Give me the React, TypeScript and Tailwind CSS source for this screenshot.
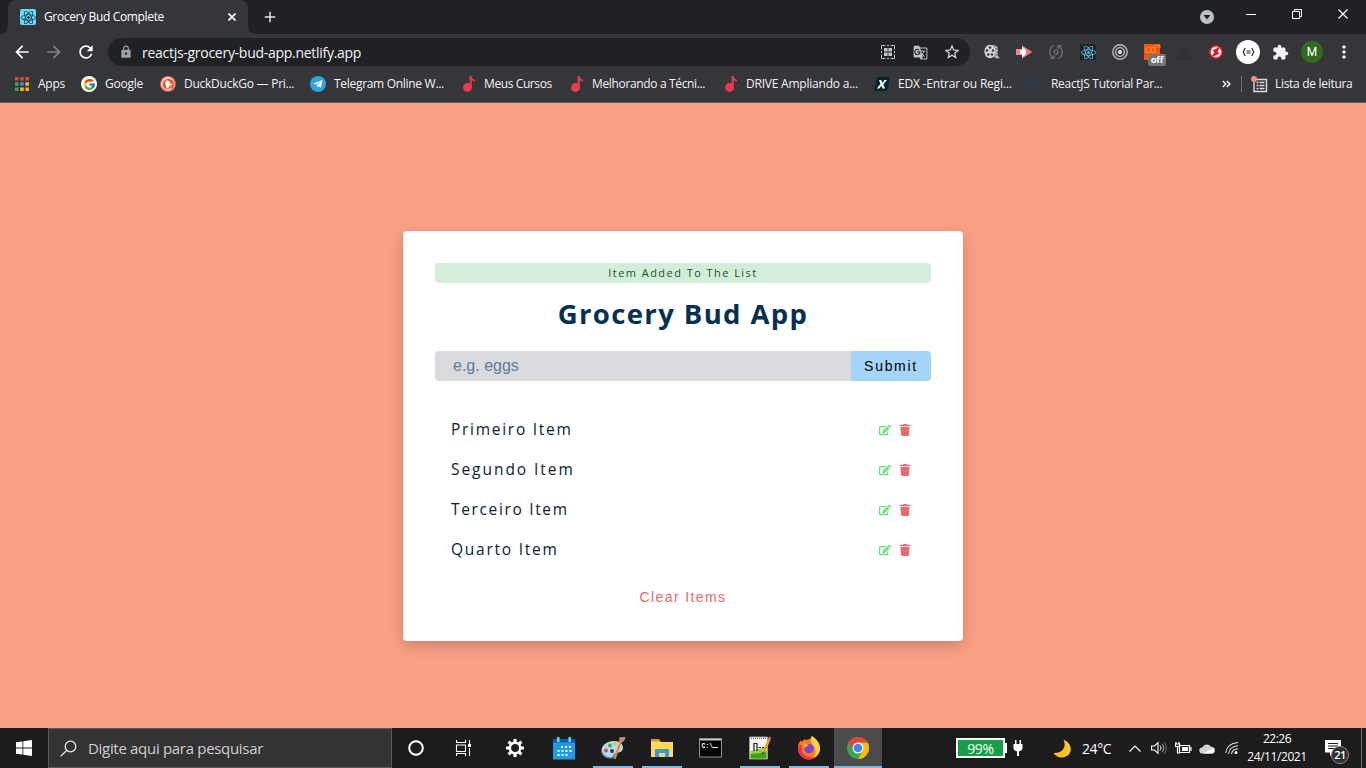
import type { ReactNode } from "react";
import { FaEdit, FaTrash, FaReact, FaTelegramPlane } from "react-icons/fa";
import { FcGoogle } from "react-icons/fc";
import { SiDuckduckgo } from "react-icons/si";
import { MdArrowBack, MdArrowForward, MdRefresh, MdLock, MdStarBorder, MdExtension, MdMoreVert, MdGTranslate, MdAdd } from "react-icons/md";

function Svg({ w, h, className = "", children }: { w: number; h: number; className?: string; children: ReactNode }) {
  return (
    <svg width={w} height={h} viewBox={`0 0 ${w} ${h}`} fill="none" className={`shrink-0 ${className}`}>
      {children}
    </svg>
  );
}

function TabStrip() {
  return (
    <div className="flex h-[34px] bg-[#202124] pl-2">
      <div className="relative flex w-[240px] items-center rounded-t-lg bg-[#35363a] pl-3">
        <div className="flex size-4 items-center justify-center rounded-[2px] bg-[#61dafb]">
          <FaReact size={15} color="#20232a" />
        </div>
        <span className="ml-2 w-[184px] whitespace-nowrap text-[12px] tracking-[-0.35px] text-white">Grocery Bud Complete</span>
        <Svg w={8} h={8}><path d="M.5.5l7 7M7.500.5l-7 7" stroke="#fff" strokeWidth="1.600" /></Svg>
        <Svg w={8} h={8} className="absolute bottom-0 -left-2">
          <path d="M8 0v8H0a8 8 0 0 0 8-8z" fill="#35363a" />
        </Svg>
        <Svg w={8} h={8} className="absolute bottom-0 -right-2">
          <path d="M0 0v8h8a8 8 0 0 1-8-8z" fill="#35363a" />
        </Svg>
      </div>
      <div className="flex flex-1 items-center pl-[13px]">
        <MdAdd size={18} color="#dee1e6" />
      </div>
      <div className="flex w-[178px] items-start">
        <Svg w={178} h={34}>
          <circle cx="19" cy="17" r="7" fill="#bdc1c6" />
          <path d="M15.5 15h7L19 19.5z" fill="#202124" />
          <path d="M58 14.500h10" stroke="#fff" />
          <path d="M104.500 11.500h7v7h-7zM106.500 11.500v-2h7v7h-2" stroke="#fff" />
          <path d="M150.500 9.500l9 9m0-9l-9 9" stroke="#fff" strokeWidth="1.2" />
        </Svg>
      </div>
    </div>
  );
}

function Cell({ children }: { children: ReactNode }) {
  return <div className="relative flex h-9 w-8 shrink-0 items-center justify-center">{children}</div>;
}

function Toolbar() {
  return (
    <div className="flex h-9 items-center pl-[6px]">
      <Cell><MdArrowBack size={20} color="#fff" /></Cell>
      <Cell><MdArrowForward size={20} color="#808286" /></Cell>
      <Cell><MdRefresh size={20} color="#fff" /></Cell>
      <div className="ml-[6px] flex h-7 w-[862px] items-center rounded-full bg-[#202124] pl-[11px]">
        <MdLock size={14} color="#9aa0a6" />
        <span className="ml-[9px] flex-1 whitespace-nowrap text-[14px] tracking-[-0.28px] text-[#f1f3f4]">reactjs-grocery-bud-app.netlify.app</span>
        <Cell>
          <Svg w={14} h={14}>
            <path d="M4.500.5H.5V4.500M9.500.5H13.500V4.500M4.500 13.500H.5V9.500M9.500 13.500H13.500V9.500M6 .5h2M6 13.500h2M.5 6v2M13.500 6v2" stroke="#bdc1c6" />
            <path d="M3 3h3.600v3.600H3zM7.400 3H11v3.600H7.400zM3 7.400h3.600V11H3zM7.400 7.400H11V11H7.400z" fill="#c4c7cb" />
          </Svg>
        </Cell>
        <Cell><MdGTranslate size={15} color="#bdc1c6" /></Cell>
        <Cell><MdStarBorder size={18} color="#dadce0" /></Cell>
        <div className="w-[2px]" />
      </div>
      <div className="w-[6px]" />
      <Cell>
        <Svg w={16} h={16}>
          <path d="M8 1c5-1 6 3 5.500 7 0 3 .5 4 2.500 6-3 1.500-6 0-7-1z" fill="#8b8b8b" />
          <ellipse cx="6" cy="7.500" rx="5.600" ry="6.800" fill="#d4d4d4" />
          <g fill="#37383c">
            <circle cx="6" cy="3.500" r="1.300" /><circle cx="3" cy="6.500" r="1.200" /><circle cx="4.300" cy="10.500" r="1.300" /><circle cx="8" cy="10.500" r="1.200" /><circle cx="9" cy="6.500" r="1.200" />
          </g>
          <path d="M11.500 3l2 1M12 6l2 1M11.500 9l2 1M11.500 12l3 1.500" stroke="#e6e6e6" />
        </Svg>
      </Cell>
      <Cell>
        <Svg w={16} h={16}>
          <path d="M0 5h6V1.500L10 4l6 4-6 4-4 2.500V11H0z" fill="#f98484" />
          <path d="M4 6h6v4H4z" fill="#fff" /><path d="M6 3l3 2v6l-3 2z" fill="#fff" /><path d="M10 4.500L16 8l-6 3.500z" fill="#f47474" />
        </Svg>
      </Cell>
      <Cell>
        <Svg w={16} h={16}>
          <path d="M6 1.500C2 2.500.5 8 3 12l3 2.500M6 14.500H2.500M6 14.500V11M10 14.500c4-1 5.500-6.500 3-10.500L10 1.500M10 1.500h3.500M10 1.500V5" stroke="#737578" strokeWidth="1.200" />
          <circle cx="8" cy="8" r="2" stroke="#737578" strokeWidth="1.200" />
        </Svg>
      </Cell>
      <Cell>
        <div className="flex size-4 items-center justify-center bg-[#202226]"><FaReact size={15} color="#61dafb" /></div>
      </Cell>
      <Cell>
        <Svg w={16} h={16}>
          <circle cx="8" cy="8" r="7.200" stroke="#bdbdbd" strokeWidth="1.400" />
          <circle cx="8" cy="8" r="4.400" stroke="#bdbdbd" strokeWidth="1.400" />
          <circle cx="8" cy="8" r="2.200" fill="#d0d0d0" />
        </Svg>
      </Cell>
      <Cell>
        <div className="flex h-4 w-4 bg-[#ff5200] pl-px text-[#ffa56e]">
          <span className="text-[11px] leading-[10px] tracking-[-0.5px]">cd</span>
          <span className="text-[5px] leading-[5px]">m</span>
        </div>
        <div className="absolute top-[20px] left-[12px] flex h-[12px] w-[18px] items-center justify-center rounded-[2px] bg-[#757575] text-[9.5px] font-bold leading-none tracking-[-0.2px] text-white">off</div>
      </Cell>
      <Cell>
        <Svg w={14} h={15}><path d="M7 0v10M2.500 6.500L7 11l4.500-4.500M0 13.500h14" stroke="#2d2e31" strokeWidth="1.800" /></Svg>
      </Cell>
      <Cell>
        <Svg w={14} h={14}>
          <circle cx="7" cy="7" r="6.200" fill="#fff" stroke="#e8141a" strokeWidth="1.600" />
          <path d="M10.800 1.800L3.400 5.400l1.900 1.800-2.800 5 8-3.600-1.900-1.800z" fill="#e8141a" />
        </Svg>
      </Cell>
      <Cell>
        <div className="flex size-6 shrink-0 items-center justify-center rounded-full bg-white">
          <Svg w={13} h={8}>
            <path d="M3.500.5C1.500.5 2.800 3.500.8 4c2 .5.7 3.500 2.700 3.500M9.500.5c2 0 .7 3 2.700 3.500-2 .5-.7 3.500-2.700 3.500M4.500 3h4M4.500 5h4" stroke="#202124" strokeWidth="1.200" />
          </Svg>
        </div>
      </Cell>
      <Cell><MdExtension size={17} color="#f1f3f4" /></Cell>
      <Cell>
        <div className="flex size-[22px] items-center justify-center rounded-full bg-[#33691e] font-['Roboto',sans-serif] text-[12px] text-white">M</div>
      </Cell>
      <Cell><MdMoreVert size={20} color="#f1f3f4" /></Cell>
    </div>
  );
}

const note = (
  <Svg w={16} h={16}>
    <circle cx="7.500" cy="11.500" r="4.400" fill="#f0384f" />
    <path d="M9.500 0h2c.3 2 1 3 3.500 4v1.200c-1.500 0-2.400-.5-3.200-1.500V12H10z" fill="#f0384f" />
  </Svg>
);

const appsIcon = (
  <Svg w={14} h={14}>
    <path d="M0 0h3.500v3.500H0zM5.200 0h3.500v3.500H5.200zM10.400 0h3.500v3.500h-3.500z" fill="#ea4335" />
    <path d="M0 5.200h3.500v3.500H0zM0 10.400h3.500v3.500H0z" fill="#34a853" />
    <path d="M5.200 5.200h3.500v3.500H5.200z" fill="#4285f4" />
    <path d="M10.400 5.200h3.500v3.500h-3.500zM5.200 10.400h3.500v3.500H5.200zM10.400 10.400h3.500v3.500h-3.500z" fill="#fbbc05" />
  </Svg>
);

function Bookmark({ icon, text, className }: { icon: ReactNode; text: string; className: string }) {
  return (
    <div className={`flex shrink-0 items-center ${className}`}>
      <div className="flex w-4 shrink-0 justify-center">{icon}</div>
      <span className="ml-2 whitespace-nowrap">{text}</span>
    </div>
  );
}

function Bookmarks() {
  return (
    <div className="flex h-[33px] items-center border-b border-[#5f6065] pb-[4px] pl-[14px] text-[12px] tracking-[-0.3px] text-[#f1f3f4]">
      <Bookmark className="w-[67px] tracking-[-0.25px]" text="Apps" icon={appsIcon} />
      <Bookmark className="w-[79px] tracking-[-0.25px]" text="Google" icon={<div className="flex size-4 items-center justify-center rounded-full bg-white"><FcGoogle size={13} /></div>} />
      <Bookmark
        className="w-[150px] tracking-[-0.25px]"
        text="DuckDuckGo — Pri..."
        icon={<div className="flex size-4 items-center justify-center rounded-full bg-[#de5833]"><div className="flex size-[14px] items-center justify-center rounded-full bg-white"><SiDuckduckgo size={13} color="#de5833" /></div></div>}
      />
      <Bookmark className="w-[150px]" text="Telegram Online W..." icon={<div className="flex size-4 items-center justify-center rounded-full bg-[#2ca5e0]"><FaTelegramPlane size={10} color="#fff" /></div>} />
      <Bookmark className="w-[108px] tracking-[-0.4px]" text="Meus Cursos" icon={note} />
      <Bookmark className="w-[154px] tracking-[-0.35px]" text="Melhorando a Técni..." icon={note} />
      <Bookmark className="w-[152px] tracking-[-0.22px]" text="DRIVE Ampliando a..." icon={note} />
      <Bookmark
        className="w-[153px] tracking-[-0.2px]"
        text="EDX -Entrar ou Regi..."
        icon={
          <Svg w={16} h={14}>
            <path d="M3 0h13l-2.500 14H0z" fill="#02262b" />
            <path d="M5 3h2.300l1 3 2.200-3H13L9.300 7.200 11 11.500H8.600L7.500 8.700 5.300 11.500H2.800L6.500 7z" fill="#fff" />
          </Svg>
        }
      />
      <Bookmark
        className="flex-1"
        text="ReactJS Tutorial Par..."
        icon={<Svg w={16} h={16}><path d="M1 2h9v11H1zM12 14h4M7.500 6H4v4h3.500" stroke="#26405a" strokeWidth="1.200" /></Svg>}
      />
      <Svg w={9} h={8} className="mr-[10px]"><path d="M.8 1l3 3-3 3M4.800 1l3 3-3 3" stroke="#f1f3f4" strokeWidth="1.500" /></Svg>
      <div className="mr-[9px] h-4 w-px bg-[#6b6c70]" />
      <Svg w={17} h={17}>
        <path d="M3 3.500h12.500v12H3z" stroke="#dadce0" strokeWidth="1.400" />
        <path d="M5.500 6.500h2M8.500 6.500h5M5.500 9.500h2M8.500 9.500h5M5.500 12.500h2M8.500 12.500h5" stroke="#dadce0" strokeWidth="1.600" />
        <circle cx="3" cy="3" r="3" fill="#f28b82" />
      </Svg>
      <span className="mr-[14px] ml-[7px] w-[77px] whitespace-nowrap">Lista de leitura</span>
    </div>
  );
}

const items = [
  { text: "Primeiro Item", tracking: "tracking-[1.72px]" },
  { text: "Segundo Item", tracking: "tracking-[1.95px]" },
  { text: "Terceiro Item", tracking: "tracking-[1.65px]" },
  { text: "Quarto Item", tracking: "tracking-[1.75px]" },
];

function Card() {
  return (
    <main className="h-[410px] w-[560px] rounded-[4px] bg-white p-8 shadow-[0_5px_15px_rgba(0,0,0,0.2)]">
      <p className="flex h-5 items-center justify-center rounded-[4px] bg-[#d4edda] text-[11px] tracking-[1.45px] text-[#155724]">Item Added To The List</p>
      <h1 className="mt-[10px] text-center text-[27.5px] leading-[42px] font-bold tracking-[1.38px] text-[#053050]">Grocery Bud App</h1>
      <div className="mt-4 flex h-[30px] font-['Liberation_Sans',Arial,sans-serif]">
        <input className="w-[416px] rounded-l-[4px] bg-[#dadbde] pl-[18px] text-[16px] outline-none placeholder:text-[#617d98]" placeholder="e.g. eggs" />
        <button className="w-20 rounded-r-[4px] bg-[#a5d5f8] text-[14px] tracking-[1.7px] text-black">Submit</button>
      </div>
      <div className="mt-[29px]">
        {items.map(({ text, tracking }) => (
          <div key={text} className="flex h-10 items-center pr-5 pl-4">
            <p className={`flex-1 text-[15.5px] text-[#0a2236] ${tracking}`}>{text}</p>
            <FaEdit size={12} color="#66e575" className="mb-px" />
            <FaTrash size={12} color="#e66b6b" className="mb-px ml-[8px]" />
          </div>
        ))}
      </div>
      <button className="mx-auto mt-[17px] block h-5 font-['Liberation_Sans',Arial,sans-serif] text-[14px] tracking-[1.4px] text-[#e66b6b]">Clear Items</button>
    </main>
  );
}

function Task({ running, active, children }: { running?: boolean; active?: boolean; children: ReactNode }) {
  return (
    <div className={`relative mr-px flex h-10 w-12 shrink-0 items-center justify-center ${active ? "bg-[#4b4b4b]" : ""}`}>
      {children}
      {(running || active) && <div className={`absolute bottom-0 h-[2px] bg-[#76b9ed] ${active ? "w-12" : "w-10"}`} />}
    </div>
  );
}

function Gear() {
  return (
    <Svg w={18} h={18}>
      <g stroke="#fff" strokeWidth="3.200">
        <path d="M9 0v4M9 14v4M0 9h4M14 9h4M2.600 2.600l3 3M12.400 12.400l3 3M2.600 15.400l3-3M12.400 5.600l3-3" />
      </g>
      <circle cx="9" cy="9" r="5.200" stroke="#fff" strokeWidth="2.400" fill="#1c1c1c" />
    </Svg>
  );
}

function Taskbar() {
  return (
    <div className="flex h-10 items-center bg-[#1c1c1c] text-white">
      <div className="flex w-12 justify-center">
        <Svg w={16} h={16}><path d="M0 2.300l6.500-.9v6.200H0zM7.300 1.300L16 0v7.600H7.300zM0 8.400h6.500v6.200L0 13.700zM7.300 8.400H16V16l-8.700-1.300z" fill="#fff" /></Svg>
      </div>
      <div className="flex h-10 w-[344px] items-center border border-[#5a5a5a] bg-[#333] pl-[11px]">
        <Svg w={17} h={17}><circle cx="10.500" cy="6.500" r="5.300" stroke="#e8e8e8" strokeWidth="1.300" /><path d="M6.800 10.200L.6 16.400" stroke="#e8e8e8" strokeWidth="1.300" /></Svg>
        <span className="ml-[11px] text-[15px] tracking-[-0.31px] whitespace-nowrap text-[#cfcfcf]">Digite aqui para pesquisar</span>
      </div>
      <div className="flex w-12 justify-center"><Svg w={16} h={16}><circle cx="8" cy="8" r="6.800" stroke="#fff" strokeWidth="2" /></Svg></div>
      <div className="flex w-[51px] justify-center pr-1">
        <Svg w={17} h={16}>
          <path d="M1.500 0v2.500h9V0M1.500 16v-2.500h9V16M1.500 5h9v6.500h-9zM14.500 0v4M14.500 8v8" stroke="#fff" strokeWidth="1.100" />
          <path d="M13 4h3v3h-3z" fill="#fff" />
        </Svg>
      </div>
      <Task><Gear /></Task>
      <Task>
        <Svg w={22} h={23}>
          <path d="M0 2h22v20.500H0z" fill="#1d9bea" /><path d="M0 2h22v3.500H0z" fill="#0f5fa8" />
          <path d="M4 0h2.500v5H4zM15.500 0H18v5h-2.500z" fill="#5dd6f5" />
          <path d="M8 10h10.500M4.500 14h14M4.500 18h10" stroke="#fff" strokeWidth="2" strokeDasharray="2 2" />
        </Svg>
      </Task>
      <Task running>
        <Svg w={25} h={24}>
          <path d="M13 5c6 0 9 3 9 7-1 5-4 4-6 5-3 1-2 4-5 5C6 23 .5 20 .5 14 1 9 6 5 13 5z" fill="#b5d9ef" />
          <path d="M1 16c1 4 6 6.500 10 5.500 2-1 2-3 3-4" stroke="#5b9bc4" strokeWidth="1.500" />
          <circle cx="5" cy="14.500" r="2" fill="#e14b36" /><circle cx="9" cy="9.500" r="1.900" fill="#3fae49" /><circle cx="14" cy="8" r="1.800" fill="#f0b823" /><circle cx="11" cy="15" r="1.900" fill="#26323a" />
          <path d="M13.500 23L20 5" stroke="#e98a24" strokeWidth="2.200" /><path d="M18 6.500L18.500 1c2 1 3-.5 6 0-.5 2-1 4-3.500 5.500z" fill="#b9906a" />
        </Svg>
      </Task>
      <Task running>
        <Svg w={22} h={19}>
          <path d="M0 1h8l2 2h12v15H0z" fill="#ffd767" /><path d="M0 0h8l1.500 2.500H0z" fill="#d99a14" />
          <path d="M4 18v-8h14v8h-4v-4H8v4z" fill="#3a96dd" />
        </Svg>
      </Task>
      <Task>
        <Svg w={23} h={20} className="mr-[2px]">
          <path d="M.5.5h22v18.500H.5z" fill="#050505" stroke="#8f8f8f" /><path d="M1 1h21v1.500H1z" fill="#c8c8c8" />
          <text x="2.500" y="10" fontSize="6.500" fontWeight="bold" fill="#fff" fontFamily="Liberation Mono, monospace">C:\</text>
          <path d="M14 9.500h5" stroke="#fff" />
        </Svg>
      </Task>
      <Task running>
        <Svg w={23} h={24}>
          <path d="M.5 1h18v22H.5z" fill="#f5f5f0" stroke="#9a9a9a" /><path d="M1.500 15c5-1 11-2 16-5v12.500h-16z" fill="#8ed63f" /><path d="M1.500 18c5-1 11 0 16-3v7.500h-16z" fill="#3ea313" />
          <path d="M2 2.500h15" stroke="#777" strokeDasharray="1 1" />
          <path d="M5 7v8M5 7.500h3V15M9.500 11.500h2.500M13 11.500h2" stroke="#222" strokeWidth="1.200" />
          <path d="M14.500 16.500L20.500 3" stroke="#e5a11d" strokeWidth="2.600" /><path d="M13.300 18.500l.2-2.700 2 1z" fill="#333" /><path d="M20 3.500L21.200 1" stroke="#d9655a" strokeWidth="2.600" />
        </Svg>
      </Task>
      <Task running>
        <Svg w={24} h={24}>
          <path d="M12 3c3 0 2-3 3-3 2 2 8 5 8 12.500A11 11 0 0 1 12 23.500 11 11 0 0 1 1 12.500C1 8 2.500 6 4 4c0 1 .5 1.500 1 2 1-2 2-2.500 3-3 0 1 2 1.500 4 0z" fill="#ff7a1c" />
          <path d="M15 0c2 2 8 5 8 12.500 0 5-4 9-8 10 4-4 4-7 3-10-1-3-5-5-4-9 0-1.500.5-2.500 1-3.500z" fill="#ffd43a" />
          <path d="M1 12C1 18 5 23.500 12 23.500c3 0 5-1 7-3-7 2-14-1-14-7 0-2 0-2-1-5-2 1-3 2-3 3.500z" fill="#f5304e" />
          <circle cx="12" cy="12.500" r="4.800" fill="#7846d9" /><path d="M5 8c3-1 5 0 7 1.500-2 0-3 1-4 2.500-1-2-1-3-3-4z" fill="#ffb32c" />
        </Svg>
      </Task>
      <Task active>
        <Svg w={22} h={22}>
          <circle cx="11" cy="11" r="11" fill="#34a853" />
          <path d="M11 5.500h9.530A11 11 0 0 1 11 22l4.760-8.250z" fill="#fbbc05" />
          <path d="M1.470 5.500A11 11 0 0 1 20.530 5.500H11L6.240 13.750z" fill="#ea4335" />
          <circle cx="11" cy="11" r="5.500" fill="#fff" /><circle cx="11" cy="11" r="4.300" fill="#4285f4" />
        </Svg>
      </Task>
      <div className="ml-[73px] flex h-5 w-[49px] items-center justify-center border-2 border-white bg-[#169e48] text-[14px] tracking-[-0.3px]">99%</div>
      <div className="h-[10px] w-[2px] bg-white" />
      <Svg w={10} h={16} className="ml-[6px]"><path d="M2 0h1.500v4h3V0H8v4h1.500v4c0 2-1.500 3-3.500 3.300V16H4v-4.700C2 11 .5 10 .5 8V4H2z" fill="#fff" /></Svg>
      <Svg w={19} h={19} className="ml-[30px]"><path d="M10.500.5C21 5 20 18 9 18.500c-4 0-7-2-8.500-4.500C9 15 14 8 10.500.5z" fill="#fcc21b" /><path d="M12 2c7 5 5 15-3 16 8-3 8-10 3-16z" fill="#ffdf6d" /></Svg>
      <div className="ml-[10px] flex w-[47px] shrink-0 text-[14px] tracking-[-0.4px]">24°C</div>
      <Svg w={12} h={7}><path d="M.5 6.500L6 1l5.500 5.500" stroke="#fff" strokeWidth="1.200" /></Svg>
      <Svg w={17} h={14} className="ml-[10px]">
        <path d="M.6 5h2.900L7 1.700v10.600L3.500 9H.6z" stroke="#fff" strokeWidth="1.100" /><path d="M9 4.500c1.300 1.500 1.300 3.500 0 5" stroke="#fff" /><path d="M11 2.800c2.200 2.500 2.200 6 0 8.500" stroke="#bbb" /><path d="M13 1c3 3.500 3 8.500 0 12" stroke="#777" />
      </Svg>
      <Svg w={17} h={13} className="ml-[7px]">
        <path d="M4.500 3.500h10v7h-10zM16 5v4" stroke="#fff" strokeWidth="1.200" /><path d="M7 5h6v4H7z" fill="#fff" /><path d="M1 0v2M4 0v2M.5 2h4v2.500h-4zM2.500 5v6H5" stroke="#fff" strokeWidth="1.200" />
      </Svg>
      <Svg w={17} h={11} className="ml-[7px]"><path d="M3.500 10.500a3 3 0 0 1-.3-6A5 5 0 0 1 12 3.700a3.500 3.500 0 0 1 1.500 6.800z" fill="#d2d2d2" /><path d="M4 10.500L13 5.500a2.600 2.600 0 0 1 .5 5z" fill="#fff" /></Svg>
      <Svg w={14} h={14} className="ml-[9px]">
        <path d="M.7 12C1.500 6 6 2 13 1.500M3.600 13C4 8.500 7.500 5 13 4.700M6.600 13c.3-2.800 2.600-5 6.400-5.200" stroke="#ddd" strokeWidth="1.100" /><circle cx="11" cy="11.500" r="1.500" fill="#fff" />
      </Svg>
      <div className="ml-[7px] flex w-[62px] shrink-0 flex-col items-center text-[12px] leading-[18px] tracking-[-0.5px] whitespace-nowrap"><div>22:26</div><div className="tracking-[-0.42px]">24/11/2021</div></div>
      <div className="relative mt-2 ml-[16px] h-[24px] w-[25px] shrink-0">
        <Svg w={18} h={18}><path d="M1 0h16v12.500H9.500L6 16V12.500H1z" fill="#fff" /><path d="M4 3.500h10M4 6h10M4 8.500h7" stroke="#1c1c1c" /></Svg>
        <div className="absolute right-0 bottom-0 flex size-[18px] items-center justify-center rounded-full border border-[#8a8a8a] bg-[#2e2e2e] text-[11px] font-semibold tracking-[-0.5px]">21</div>
      </div>
      <div className="ml-auto h-10 w-[5px] border-l border-[#6a6a6a]" />
    </div>
  );
}

export default function App() {
  return (
    <div className="flex h-[768px] w-[1366px] flex-col overflow-hidden font-['Open_Sans','Noto_Sans',sans-serif]">
      <header className="bg-[#35363a]">
        <TabStrip />
        <Toolbar />
        <Bookmarks />
      </header>
      <section className="flex flex-1 items-start justify-center bg-[#fca085] pt-32">
        <Card />
      </section>
      <Taskbar />
    </div>
  );
}
